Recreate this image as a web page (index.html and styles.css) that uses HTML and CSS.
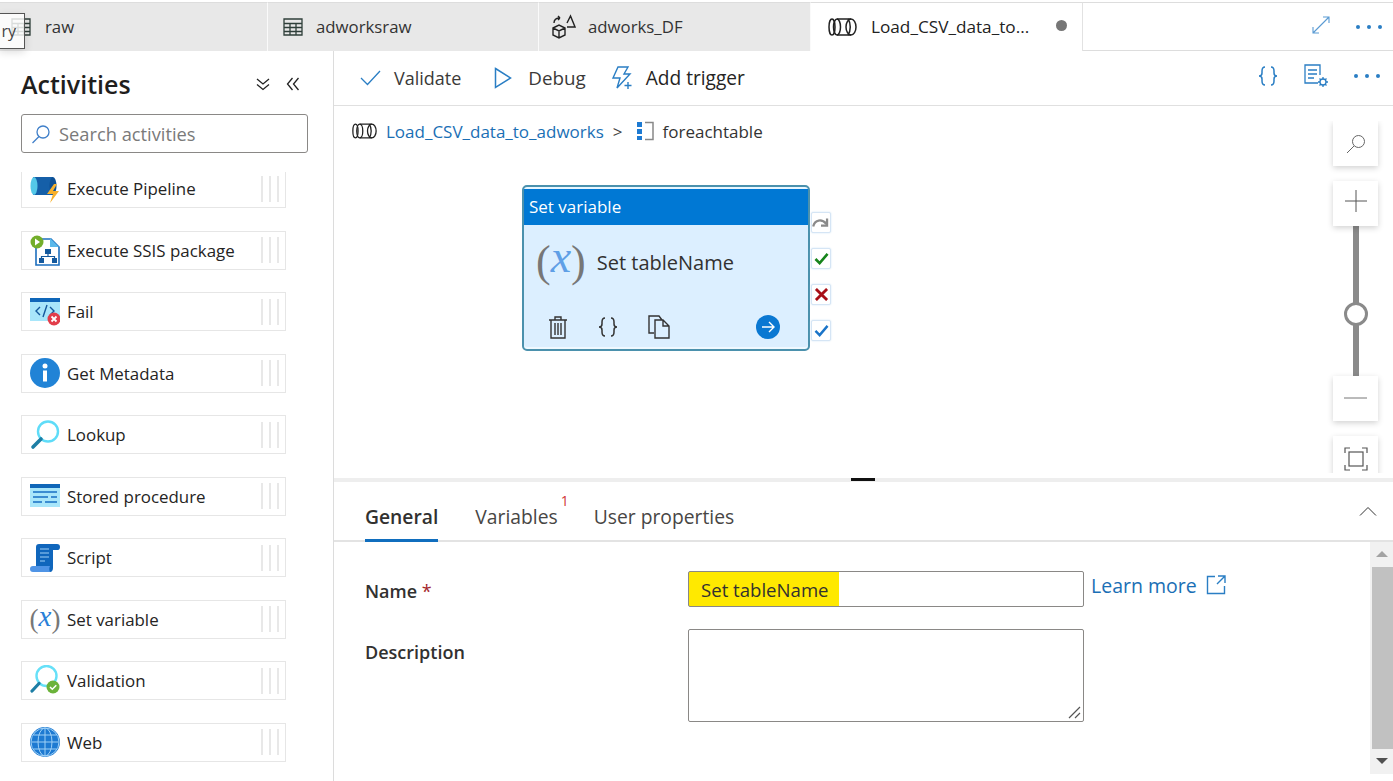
FILE: index.html
```html
<!DOCTYPE html>
<html lang="en">
<head>
<meta charset="utf-8">
<title>Load_CSV_data_to_adworks</title>
<link rel="stylesheet" href="styles.css">
</head>
<body>
<div class="tooltip">ry</div>
<header class="tabbar">
  <div class="tab tab-raw">
    <svg class="tab-icon" width="20" height="18" viewBox="0 0 20 18"><path d="M1 1h18v16H1zM1 5.500h18M1 9.500h18M1 13.500h18M7 5.500V17M13 5.500V17" fill="none" stroke="#2f3f3a" stroke-width="1.300"/></svg>
    <span>raw</span>
  </div>
  <div class="tab tab-table">
    <svg class="tab-icon" width="20" height="18" viewBox="0 0 20 18"><path d="M1 1h18v16H1zM1 5.500h18M1 9.500h18M1 13.500h18M7 5.500V17M13 5.500V17" fill="none" stroke="#2f3f3a" stroke-width="1.300"/></svg>
    <span>adworksraw</span>
  </div>
  <div class="tab tab-df">
    <svg class="tab-icon" width="25" height="25" viewBox="0 0 25 25" fill="none" stroke="#222" stroke-width="1.400"><path d="M2 14l6-3 6 3v7l-6 3-6-3zM2 14l6 3 6-3M8 17v7M16 13h8L19.500 2 16 9"/><path d="M3 9c0-3 2-5 6-5M9 4L7 2M9 4L7 6"/></svg>
    <span>adworks_DF</span>
  </div>
  <div class="tab tab-active">
    <svg class="pipe-icon" width="29" height="18" viewBox="0 0 29 18"><use href="#pipe"/></svg>
    <span class="tab-title">Load_CSV_data_to...</span>
    <i class="dirty-dot"></i>
  </div>
  <div class="tab-rest">
    <svg class="expand" width="18" height="18" viewBox="0 0 18 18" fill="none" stroke="#5a9bd3" stroke-width="1.100"><path d="M1 17L17 1M11 1h6v6M1 11v6h6"/></svg>
    <span class="dots"><i></i><i></i><i></i></span>
  </div>
</header>

<svg class="defs" width="0" height="0">
  <defs>
    <g id="pipe" fill="none" stroke="#222" stroke-width="1.500">
      <ellipse cx="4" cy="9" rx="3" ry="8"/>
      <ellipse cx="9" cy="9" rx="3.500" ry="8"/>
      <path d="M9 1h14M9 17h14"/>
      <ellipse cx="23" cy="9" rx="5" ry="8"/>
      <path d="M20 1c3 4 3 12 0 16"/>
    </g>
    <g id="brackets" fill="none" stroke-width="1.500">
      <path d="M8 1C5 1 5 3 5 5v2c0 2-1 3-3 3 2 0 3 1 3 3v2c0 2 0 4 3 4M14 1c3 0 3 2 3 4v2c0 2 1 3 3 3-2 0-3 1-3 3v2c0 2 0 4-3 4"/>
    </g>
  </defs>
</svg>

<div class="workspace">
  <aside class="sidebar">
    <div class="side-head">
      <h1>Activities</h1>
      <svg class="side-ctl" width="14" height="14" viewBox="0 0 14 14" fill="none" stroke="#222" stroke-width="1.300"><path d="M1 2l6 5 6-5M1 7.500l6 5 6-5"/></svg>
      <svg class="side-ctl side-ctl-b" width="14" height="14" viewBox="0 0 14 14" fill="none" stroke="#222" stroke-width="1.300"><path d="M6.500 1l-5 6 5 6M12.500 1l-5 6 5 6"/></svg>
    </div>
    <div class="search">
      <svg width="20" height="20" viewBox="0 0 20 20" fill="none" stroke="#3f7fc9" stroke-width="1.300"><circle cx="12" cy="8" r="6"/><path d="M8 12.500L1.500 19"/></svg>
      <span>Search activities</span>
    </div>
    <ul class="activities">
      <li class="activity">
        <svg width="30" height="30" viewBox="0 0 30 30"><rect x="3" y="3" width="20" height="18" fill="#155fa8"/><ellipse cx="4" cy="12" rx="3.500" ry="9" fill="#54c8e8"/><ellipse cx="23" cy="12" rx="3.500" ry="9" fill="#0d4f94"/><path d="M24 10l-7 10h6l-3 9 9-12h-6l4-7z" fill="#f7b02c"/></svg>
        <span>Execute Pipeline</span><b class="grip"></b>
      </li>
      <li class="activity">
        <svg width="30" height="32" viewBox="0 0 30 32"><path d="M6 5h15l8 8v18H6z" fill="#fff" stroke="#1d6fbe" stroke-width="1.600"/><path d="M20 4l9 9h-9z" fill="#5bb8ea"/><circle cx="7" cy="8" r="6.500" fill="#73ae2b"/><path d="M5 4.500l5 3.500-5 3.500z" fill="#fff"/><path d="M15 15h6v5h-6zM9 24h5v5H9zM22 24h5v5h-5z" fill="#14599d"/><path d="M18 20v2.500h-6.500V24M18 22.500h6.500V24" fill="none" stroke="#14599d" stroke-width="1.200"/></svg>
        <span>Execute SSIS package</span><b class="grip"></b>
      </li>
      <li class="activity">
        <svg width="30" height="28" viewBox="0 0 30 28"><rect width="30" height="23" fill="#a8e6fa"/><rect width="30" height="4" fill="#0f66b8"/><path d="M10 9l-4 4 4 4M20 9l4 4-4 4M17 7l-4 12" fill="none" stroke="#14599d" stroke-width="1.400"/><circle cx="24" cy="21" r="6.500" fill="#e23d4a"/><path d="M21.500 18.500l5 5M26.500 18.500l-5 5" stroke="#fff" stroke-width="1.800"/></svg>
        <span>Fail</span><b class="grip"></b>
      </li>
      <li class="activity">
        <svg width="30" height="30" viewBox="0 0 30 30"><circle cx="15" cy="15" r="15" fill="#2183d6"/><circle cx="15" cy="8" r="2.500" fill="#fff"/><rect x="13" y="12.500" width="4" height="11" fill="#fff"/></svg>
        <span>Get Metadata</span><b class="grip"></b>
      </li>
      <li class="activity">
        <svg width="30" height="32" viewBox="0 0 30 32" fill="none"><circle cx="18" cy="12.500" r="10" stroke="#5fdcf8" stroke-width="2.400"/><path d="M11 20L3 28" stroke="#1d7ea5" stroke-width="3.600" stroke-linecap="round"/></svg>
        <span>Lookup</span><b class="grip"></b>
      </li>
      <li class="activity">
        <svg width="30" height="24" viewBox="0 0 30 24"><rect width="30" height="23" fill="#a8e6fa"/><rect width="30" height="4" fill="#0f66b8"/><path d="M3 8h24M3 13h15M21 13h6M3 18h9M15 18h12" stroke="#1770c4" stroke-width="1.500"/></svg>
        <span>Stored procedure</span><b class="grip"></b>
      </li>
      <li class="activity">
        <svg width="30" height="28" viewBox="0 0 30 28"><path d="M6 3c0-2 1-3 3-3h18c2 0 3 1 3 3s-1 3-2 3h-5v18c0 2-1 4-3 4H4c3-1 2-4 2-6z" fill="#1066bc"/><path d="M0 25c0-2 1-3 3-3h17c-1 2-1 4 0 6H3c-2 0-3-1-3-3z" fill="#4f94e6"/><path d="M10 5h9M10 9h9M10 13h9M10 17h5" stroke="#9fd0f5" stroke-width="1.200"/></svg>
        <span>Script</span><b class="grip"></b>
      </li>
      <li class="activity">
        <span class="x-icon"><em class="paren">(</em><em class="x">x</em><em class="paren">)</em></span>
        <span>Set variable</span><b class="grip"></b>
      </li>
      <li class="activity">
        <svg width="30" height="32" viewBox="0 0 30 32" fill="none"><circle cx="16.500" cy="11" r="10" stroke="#66e0f8" stroke-width="2.400"/><path d="M9 18.500L2 26" stroke="#1d7ea5" stroke-width="3.200" stroke-linecap="round"/><circle cx="23" cy="22" r="6.500" fill="#6bb33a"/><path d="M20 22l2.300 2.300 4-4" stroke="#fff" stroke-width="1.500"/></svg>
        <span>Validation</span><b class="grip"></b>
      </li>
      <li class="activity">
        <svg width="30" height="30" viewBox="0 0 30 30" fill="none"><circle cx="15" cy="15" r="15" fill="#1d7ad2"/><g stroke="#9ed0f6" stroke-width="1"><circle cx="15" cy="15" r="14"/><ellipse cx="15" cy="15" rx="7" ry="14"/><path d="M15 1v28M1.500 15h27M3.500 8h23M3.500 22h23"/></g></svg>
        <span>Web</span><b class="grip"></b>
      </li>
    </ul>
  </aside>

  <main class="main">
    <div class="toolbar">
      <div class="tool tool-validate">
        <svg width="21" height="16" viewBox="0 0 21 16" fill="none" stroke="#2a7ec4" stroke-width="1.300"><path d="M1 8l6.500 6.500L20 1"/></svg>
        <span>Validate</span>
      </div>
      <div class="tool tool-debug">
        <svg width="18" height="22" viewBox="0 0 18 22" fill="none" stroke="#2a7ec4" stroke-width="1.500"><path d="M1.500 1.500L16.500 11 1.500 20.500z"/></svg>
        <span>Debug</span>
      </div>
      <div class="tool tool-trigger">
        <svg width="24" height="24" viewBox="0 0 24 24" fill="none" stroke="#2a7ec4" stroke-width="1.400"><path d="M7 1h10l-4 7h6L6 22l3-10H2zM17 16v7M13.500 19.500h7"/></svg>
        <span>Add trigger</span>
      </div>
      <div class="tool-right">
        <svg width="22" height="24" viewBox="0 0 22 20" stroke="#2a7ec4"><use href="#brackets"/></svg>
        <svg width="25" height="24" viewBox="0 0 25 24" fill="none" stroke="#2a7ec4" stroke-width="1.300"><path d="M14 19H1V1h15v10M4 6h9M4 10h9M4 14h6"/><circle cx="19" cy="18" r="3"/><path d="M19 13v2M19 21v2M14 18h2M22 18h2M15.500 14.500L17 16M21 20l1.500 1.500M22.500 14.500L21 16M17 20l-1.500 1.500"/></svg>
        <span class="dots"><i></i><i></i><i></i></span>
      </div>
    </div>

    <section class="canvas">
      <nav class="crumbs">
        <svg width="25" height="16" viewBox="0 0 29 18"><use href="#pipe"/></svg>
        <a class="crumb-link">Load_CSV_data_to_adworks</a>
        <span class="crumb-sep">&gt;</span>
        <svg width="18" height="20" viewBox="0 0 18 20"><path d="M1 1h5v5H1zM1 8h5v5H1zM1 15h5v4H1z" fill="#1d7ad2"/><path d="M9 1.500h8v17H9" fill="none" stroke="#888" stroke-width="1.500"/></svg>
        <span class="crumb-current">foreachtable</span>
      </nav>

      <article class="node">
        <div class="node-title">Set variable</div>
        <div class="node-body">
          <span class="x-icon x-icon-lg"><em class="paren">(</em><em class="x">x</em><em class="paren">)</em></span>
          <span class="node-name">Set tableName</span>
        </div>
        <div class="node-actions">
          <svg width="20" height="24" viewBox="0 0 20 24" fill="none" stroke="#333" stroke-width="1.400"><path d="M1 5h18M7 5V2h6v3M3 5v18h14V5M7 8v12M10 8v12M13 8v12"/></svg>
          <svg width="22" height="22" viewBox="0 0 22 20" stroke="#333"><use href="#brackets"/></svg>
          <svg width="22" height="24" viewBox="0 0 22 24" fill="none" stroke="#333" stroke-width="1.400"><path d="M6 18H1V1h10l3 4M7 5h8l6 6v12H7zM15 5v6h6"/></svg>
          <span class="node-go">
            <svg width="14" height="12" viewBox="0 0 14 12" fill="none" stroke="#fff" stroke-width="1.400"><path d="M1 6h12M8 1l5 5-5 5"/></svg>
          </span>
        </div>
      </article>

      <div class="ports">
        <span class="port"><svg width="18" height="13" viewBox="0 0 20 15" fill="none" stroke="#8a8a8a" stroke-width="2.600"><path d="M1 12c2-8 10-9 15-3M17 3v8h-7"/></svg></span>
        <span class="port"><svg width="15" height="13" viewBox="0 0 16 14" fill="none" stroke="#16841b" stroke-width="2.800"><path d="M1.500 7.500l4.500 4.500L14.500 2"/></svg></span>
        <span class="port"><svg width="15" height="13" viewBox="0 0 16 14" fill="none" stroke="#a80f17" stroke-width="3"><path d="M2 1l12 12M14 1L2 13"/></svg></span>
        <span class="port"><svg width="15" height="13" viewBox="0 0 16 14" fill="none" stroke="#1a74c8" stroke-width="2.600"><path d="M1.500 7.500l4.500 4.500L14.500 2"/></svg></span>
      </div>

      <div class="zoom">
        <button class="zoom-btn" type="button"><svg width="20" height="20" viewBox="0 0 20 20" fill="none" stroke="#666" stroke-width="1"><circle cx="12.500" cy="7.500" r="6"/><path d="M8 12L1 19"/></svg></button>
        <button class="zoom-btn zoom-plus" type="button"><svg class="plus-mark" width="22" height="22" viewBox="0 0 22 22" stroke="#555" stroke-width="1"><path d="M0 11h22M11 0v22"/></svg></button>
        <div class="zoom-track"><i class="zoom-thumb"></i></div>
        <button class="zoom-btn" type="button"><svg class="minus-mark" width="23" height="2" viewBox="0 0 23 2" stroke="#777" stroke-width="1"><path d="M0 1h23"/></svg></button>
        <button class="zoom-btn zoom-fit" type="button"><svg width="24" height="24" viewBox="0 0 24 24" fill="none" stroke="#555" stroke-width="1.200"><rect x="5" y="5" width="14" height="14"/><path d="M1 6V1h5M18 1h5v5M23 18v5h-5M6 23H1v-5"/></svg></button>
      </div>
    </section>

    <div class="splitter"><i></i></div>

    <section class="panel">
      <div class="panel-tabs">
        <span class="ptab ptab-on">General</span>
        <span class="ptab">Variables<sup class="badge">1</sup></span>
        <span class="ptab">User properties</span>
        <svg class="collapse" width="18" height="10" viewBox="0 0 18 10" fill="none" stroke="#333" stroke-width="1"><path d="M1 9.500l8-8 8 8"/></svg>
      </div>
      <div class="panel-body">
        <form class="form">
          <label class="field-label field-name">Name <span class="req">*</span></label>
          <div class="name-row">
            <input class="input" type="text" value="Set tableName">
            <a class="learn">Learn more
              <svg width="20" height="20" viewBox="0 0 20 20" fill="none" stroke="#2a7ec4" stroke-width="1.400"><path d="M9 1.500H1.500v17h17V11M12 1h7v7M19 1l-8 8" /></svg>
            </a>
          </div>
          <label class="field-label field-desc">Description</label>
          <div class="textarea-wrap">
            <textarea class="textarea"></textarea>
            <svg class="resizer" width="13" height="13" viewBox="0 0 13 13" stroke="#555" stroke-width="1.200"><path d="M1 12L12 1M7 12l5-5"/></svg>
          </div>
        </form>
        <div class="scrollbar">
          <span class="arrow arrow-up"></span>
          <span class="thumb"></span>
          <span class="arrow arrow-down"></span>
        </div>
      </div>
    </section>
  </main>
</div>
</body>
</html>
```

FILE: styles.css
```css
* { box-sizing: border-box; }
html, body { height: 100%; }
body {
  margin: 0;
  width: 1393px;
  height: 781px;
  overflow: hidden;
  background: #fff;
  color: #252423;
  font-family: "Open Sans", "Noto Sans", "Liberation Sans", sans-serif;
  font-size: 17px;
  display: flex;
  flex-direction: column;
  position: relative;
}
.defs { position: absolute; }

.tooltip {
  position: absolute;
  left: -1px;
  top: 13px;
  width: 26px;
  height: 36px;
  border: 1px solid #555;
  background: rgba(255, 255, 255, .82);
  box-shadow: 0 3px 8px rgba(0, 0, 0, .14);
  font-size: 16px;
  line-height: 34px;
  text-align: right;
  padding-right: 8px;
  color: #444;
  z-index: 3;
}

.tabbar {
  height: 51px;
  flex: none;
  display: flex;
  padding-top: 2px;
  background: #fff;
  border-top: 0;
}
.tab {
  height: 49px;
  display: flex;
  align-items: center;
  background: #e8e8e8;
  border-top: 1px solid #ddd;
  border-right: 1px solid #fafafa;
  font-size: 16.800px;
  color: #333;
  padding-bottom: 1px;
}
.tab-raw { width: 268px; padding-left: 11px; gap: 14px; }
.tab-table { width: 271px; padding-left: 15px; gap: 13px; }
.tab-df { width: 272px; padding-left: 12px; gap: 12px; }
.tab-icon { flex: none; }
.tab-active {
  width: 272px;
  padding-left: 17px;
  background: #fff;
  border-right: 1px solid #e2e2e2;
  color: #222;
}
.tab-title { margin-left: 14px; font-weight: 500; font-size: 17.200px; white-space: nowrap; width: 185px; }
.pipe-icon { flex: none; }
.dirty-dot { width: 11px; height: 11px; border-radius: 50%; background: #767676; flex: none; margin-top: -3px; }
.tab-rest {
  flex: 1;
  height: 49px;
  display: flex;
  align-items: center;
  justify-content: flex-end;
  gap: 26px;
  padding: 0 11px 0 0;
  border-top: 1px solid #ddd;
  border-bottom: 1px solid #ddd;
}
.expand { margin-bottom: 3px; }
.dots { display: inline-flex; gap: 7px; }
.dots i { width: 4px; height: 4px; border-radius: 50%; background: #2a7ec4; }

.workspace { flex: 1; min-height: 0; display: flex; }

.sidebar {
  width: 334px;
  flex: none;
  border-right: 1px solid #dcdcdc;
  display: flex;
  flex-direction: column;
  padding-left: 21px;
}
.side-head { height: 63px; display: flex; align-items: center; padding-top: 3px; }
.side-head h1 { margin: 0; font-size: 25px; font-weight: 600; color: #1f1e1d; width: 235px; }
.side-ctl { margin-top: -1px; }
.side-ctl-b { margin-left: 16px; }
.search {
  width: 287px;
  height: 39px;
  flex: none;
  border: 1px solid #8a8886;
  border-radius: 3px;
  display: flex;
  align-items: center;
  gap: 8px;
  padding-left: 9px;
  color: #7a7a7a;
  font-size: 18.300px;
}
.activities {
  list-style: none;
  margin: 19px 0 0;
  padding: 0;
  height: 609px;
  overflow: hidden;
}
.activity {
  width: 265px;
  height: 39px;
  margin: 0 0 22.500px;
  border: 1px solid #e6e6e6;
  display: flex;
  align-items: center;
  padding-left: 8px;
  font-size: 16.900px;
  color: #252423;
  position: relative;
}
.activity:first-child { margin-top: -3px; border-top-color: transparent; }
.activity > svg, .activity > .x-icon { width: 30px; flex: none; margin-right: 7px; }
.grip {
  width: 18px;
  height: 26px;
  margin-left: auto;
  margin-right: 6px;
  background: repeating-linear-gradient(90deg, #e8e8e8 0 2px, transparent 2px 8px);
}

.x-icon { display: inline-flex; align-items: center; justify-content: center; font-style: normal; }
.x-icon em { font-style: normal; }
.x-icon .paren { font-family: "Liberation Serif", serif; color: #777; font-size: 27px; font-weight: 400; line-height: 1; }
.x-icon .x { font-family: "Liberation Serif", serif; font-style: italic; color: #2a80d8; font-size: 29px; line-height: 1; margin-top: -6px; }
.x-icon-lg .paren { font-size: 44px; }
.x-icon-lg .x { font-size: 46px; color: #5f9fe6; margin-top: -10px; }

.main { flex: 1; min-width: 0; display: flex; flex-direction: column; }

.toolbar {
  height: 55px;
  flex: none;
  display: flex;
  align-items: center;
  border-bottom: 1px solid #e0e0e0;
  font-size: 18px;
  color: #3b3a39;
  padding-bottom: 1px;
}
.tool { display: flex; align-items: center; }
.tool-validate { margin-left: 26px; gap: 13px; margin-top: 0; }
.tool-debug { margin-left: 33px; gap: 16px; font-size: 18.800px; }
.tool-trigger { margin-left: 25px; gap: 11px; color: #252423; font-size: 19.100px; }
.tool-right { margin-left: auto; display: flex; align-items: center; gap: 25px; padding-right: 13px; margin-top: -3px; }

.canvas { height: 372px; flex: none; position: relative; overflow: hidden; }
.crumbs {
  display: flex;
  align-items: center;
  height: 22px;
  margin: 14px 0 0 18px;
  font-size: 17px;
}
.crumb-link { color: #1a6fb5; margin-left: 9px; }
.crumb-sep { margin: 0 13px 0 9px; color: #444; }
.crumb-current { color: #333; margin-left: 9px; }

.node {
  position: absolute;
  left: 188px;
  top: 79px;
  width: 288px;
  height: 166px;
  background: #dcefff;
  border: 2px solid #4b91ad;
  border-radius: 5px;
  box-shadow: inset 0 2px 0 #e8f6ff, inset 0 -2px 0 #f0f9ff;
  padding: 2px 0;
  display: flex;
  flex-direction: column;
}
.node-title {
  height: 36px;
  flex: none;
  background: #0078d4;
  color: #fff;
  font-size: 17px;
  line-height: 36px;
  padding-left: 5px;
}
.node-body { height: 74px; display: flex; align-items: center; padding-left: 12px; gap: 11px; }
.node-name { font-size: 20px; color: #323130; }
.node-actions { display: flex; align-items: center; height: 32px; margin-top: 12px; padding-left: 24px; gap: 29px; }
.node-go {
  width: 24px;
  height: 24px;
  border-radius: 50%;
  background: #0a78d2;
  display: flex;
  align-items: center;
  justify-content: center;
  margin-left: 57px;
}

.ports {
  position: absolute;
  left: 477px;
  top: 106px;
  display: flex;
  flex-direction: column;
  gap: 15px;
}
.port {
  width: 20px;
  height: 21px;
  background: #fff;
  border: 1px solid #d5e5f5;
  border-radius: 2px;
  box-shadow: 0 0 2px #cfe3f5;
  display: flex;
  align-items: center;
  justify-content: center;
}

.zoom {
  position: absolute;
  right: 7px;
  top: 15px;
  height: 352px;
  width: 61px;
  padding: 0 8px;
  overflow: hidden;
  display: flex;
  flex-direction: column;
  align-items: center;
}
.zoom-btn {
  width: 45px;
  height: 45px;
  flex: none;
  border: 0;
  padding: 0;
  background: #fff;
  box-shadow: 0 2px 6px rgba(0, 0, 0, .18);
  display: flex;
  align-items: center;
  justify-content: center;
  position: relative;
  z-index: 1;
}
.plus-mark { margin-bottom: 5px; }
.minus-mark { margin-bottom: 2px; }
.zoom-plus { margin-top: 15px; }
.zoom-fit { margin-top: 15px; }
.zoom-track { width: 6px; height: 150px; flex: none; background: #8a8a8a; position: relative; }
.zoom-thumb {
  position: absolute;
  left: -9px;
  top: 76px;
  width: 24px;
  height: 24px;
  border-radius: 50%;
  background: #fff;
  border: 3px solid #8a8a8a;
}

.splitter { height: 4px; flex: none; background: #eee; position: relative; }
.splitter i { position: absolute; left: 517px; top: 0; width: 24px; height: 3px; background: #111; }

.panel { flex: 1; min-height: 0; display: flex; flex-direction: column; }
.panel-tabs {
  height: 60px;
  flex: none;
  display: flex;
  align-items: flex-end;
  padding-left: 31px;
  border-bottom: 2px solid #e3e3e3;
  position: relative;
}
.ptab { font-size: 19.300px; color: #484644; margin-right: 36px; padding-bottom: 8px; height: 38px; line-height: 30px; position: relative; white-space: nowrap; }
.ptab-on { color: #323130; font-weight: 600; box-shadow: inset 0 -3px 0 #106ebe; height: 40px; margin-bottom: -2px; padding-bottom: 10px; margin-right: 37px; }
.badge { position: absolute; right: -11px; top: -8px; font-size: 14px; line-height: 1; color: #d13438; }
.collapse { position: absolute; right: 16px; top: 24px; }

.panel-body { flex: 1; min-height: 0; display: flex; }
.form {
  flex: 1;
  display: grid;
  grid-template-columns: 323px 1fr;
  align-content: start;
  padding: 29px 0 0 31px;
  row-gap: 18px;
}
.field-label { font-size: 18px; font-weight: 600; color: #323130; }
.field-name { line-height: 40px; }
.field-desc { line-height: 46px; }
.req { color: #a4262c; font-weight: 400; }
.name-row { display: flex; align-items: flex-start; }
.input {
  width: 396px;
  height: 36px;
  flex: none;
  border: 1px solid #8a8886;
  border-radius: 2px;
  padding: 0 0 0 12px;
  font: inherit;
  font-size: 18.600px;
  color: #323130;
  background: linear-gradient(#ffe900, #ffe900) no-repeat left top / 150px 100%;
}
.learn {
  margin-left: 7px;
  display: flex;
  align-items: center;
  gap: 9px;
  font-size: 19.500px;
  color: #1a6fb5;
  height: 28px;
}
.textarea-wrap { position: relative; width: 396px; height: 93px; }
.textarea {
  width: 396px;
  height: 93px;
  border: 1px solid #8a8886;
  border-radius: 2px;
  display: block;
  margin: 0;
  padding: 0;
  background: #fff;
  resize: none;
}
.resizer { position: absolute; right: 3px; bottom: 3px; }

.scrollbar {
  width: 23px;
  height: 232px;
  flex: none;
  background: #f1f1f1;
  display: flex;
  flex-direction: column;
  align-items: center;
  justify-content: space-between;
  padding: 9px 0 10px;
}
.arrow { width: 0; height: 0; border-left: 6px solid transparent; border-right: 6px solid transparent; }
.arrow-up { border-bottom: 6px solid #a3a3a3; }
.arrow-down { border-top: 6px solid #505050; }
.thumb { width: 21px; height: 182px; background: #c1c1c1; align-self: flex-end; }
```
